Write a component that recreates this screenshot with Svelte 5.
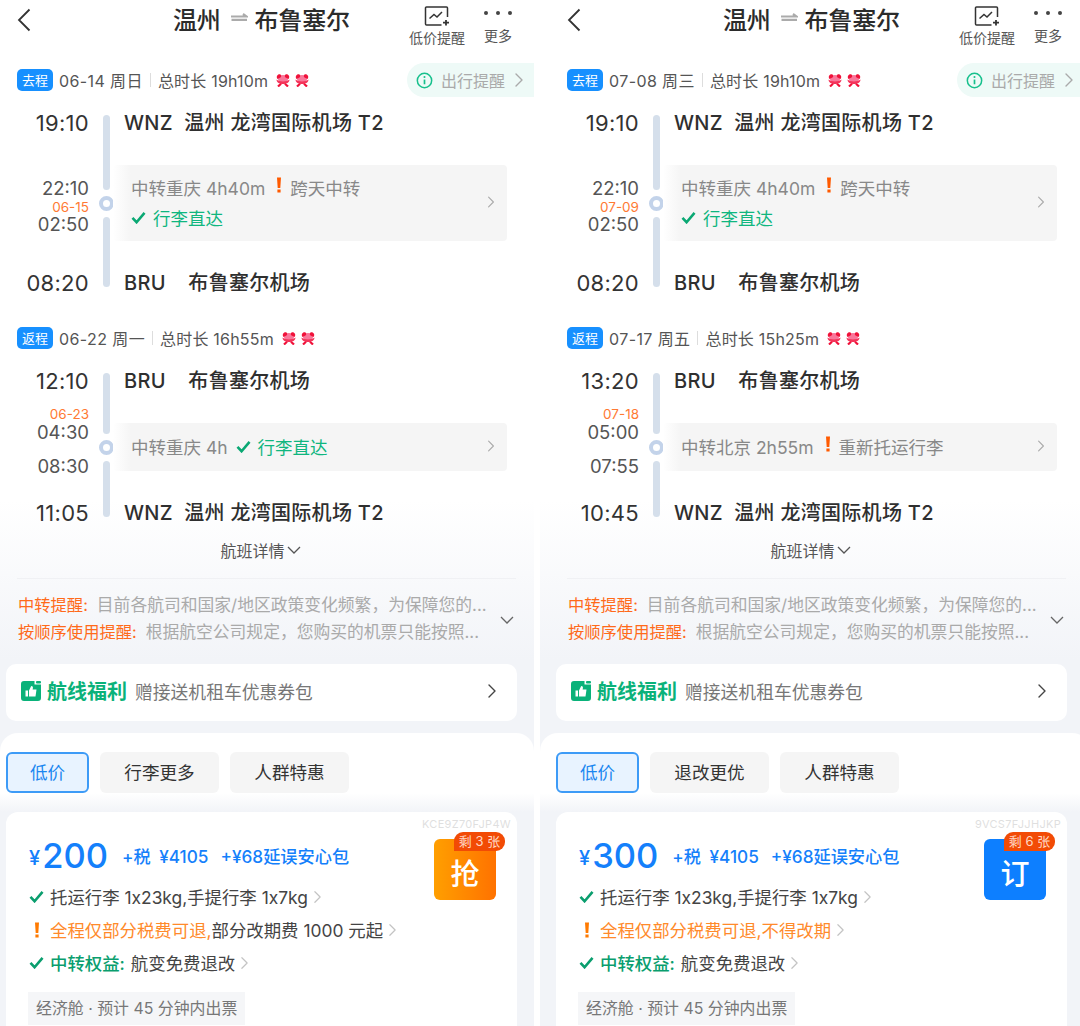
<script>
  const panels = [
    {
      trips: [
        {
          tag: '去程',
          date: '06-14 周日',
          total: '总时长 19h10m',
          notice: true,
          depart: { time: '19:10', airport: 'WNZ  温州 龙湾国际机场 T2' },
          stop: {
            arrive: '22:10',
            leaveDate: '06-15',
            leave: '02:50',
            text: '中转重庆 4h40m',
            warn: '跨天中转',
            check: '行李直达',
            wrap: true
          },
          arrive: { time: '08:20', airport: 'BRU    布鲁塞尔机场' }
        },
        {
          tag: '返程',
          date: '06-22 周一',
          total: '总时长 16h55m',
          depart: { time: '12:10', airport: 'BRU    布鲁塞尔机场' },
          stop: {
            arriveDate: '06-23',
            arrive: '04:30',
            leave: '08:30',
            text: '中转重庆 4h',
            check: '行李直达'
          },
          arrive: { time: '11:05', airport: 'WNZ  温州 龙湾国际机场 T2' }
        }
      ],
      tabs: ['低价', '行李更多', '人群特惠'],
      code: 'KCE9Z70FJP4W',
      price: '200',
      button: '抢',
      left: '剩 3 张',
      buttonClass: 'orange',
      refund: '全程仅部分税费可退,',
      change: '部分改期费 1000 元起'
    },
    {
      trips: [
        {
          tag: '去程',
          date: '07-08 周三',
          total: '总时长 19h10m',
          notice: true,
          depart: { time: '19:10', airport: 'WNZ  温州 龙湾国际机场 T2' },
          stop: {
            arrive: '22:10',
            leaveDate: '07-09',
            leave: '02:50',
            text: '中转重庆 4h40m',
            warn: '跨天中转',
            check: '行李直达',
            wrap: true
          },
          arrive: { time: '08:20', airport: 'BRU    布鲁塞尔机场' }
        },
        {
          tag: '返程',
          date: '07-17 周五',
          total: '总时长 15h25m',
          depart: { time: '13:20', airport: 'BRU    布鲁塞尔机场' },
          stop: {
            arriveDate: '07-18',
            arrive: '05:00',
            leave: '07:55',
            text: '中转北京 2h55m',
            warn: '重新托运行李'
          },
          arrive: { time: '10:45', airport: 'WNZ  温州 龙湾国际机场 T2' }
        }
      ],
      tabs: ['低价', '退改更优', '人群特惠'],
      code: '9VCS7FJJHJKP',
      price: '300',
      button: '订',
      left: '剩 6 张',
      buttonClass: 'blue',
      refund: '全程仅部分税费可退,不得改期',
      change: ''
    }
  ];
</script>

{#snippet chevron(cls)}
  <svg class={cls} viewBox="0 0 10 16" fill="none"><path d="M2 2l6 6-6 6" stroke="currentColor" stroke-width="1.4" stroke-linecap="round" stroke-linejoin="round" /></svg>
{/snippet}

{#snippet check()}
  <svg class="check" viewBox="0 0 16 14" fill="none"><path d="M1.5 7.5l4.4 4.6L14.5 2" stroke="currentColor" stroke-width="2.8" /></svg>
{/snippet}

{#snippet bang()}
  <svg class="bang" viewBox="0 0 6 16"><path d="M1 0.5h4l-.7 10.500H1.700z M1.400 12.500h3.200v3h-3.200z" fill="currentColor" /></svg>
{/snippet}

{#snippet crab()}
  <svg class="crab" viewBox="0 0 16 14" fill="none">
    <ellipse cx="8" cy="6" rx="5" ry="4" fill="#f9779a" />
    <path d="M2.500 6C.5 3.500 3 .5 5.500 1.500 6.500 2.200 6.500 3.800 5.500 4.500 4.500 5 3.500 5.500 2.500 6Z" fill="#f0123a" />
    <path d="M13.500 6C15.500 3.500 13 .5 10.500 1.500 9.500 2.200 9.500 3.800 10.500 4.500 11.500 5 12.500 5.500 13.500 6Z" fill="#f0123a" />
    <path d="M1.500 6.500C4 9 12 9 14.500 6.500 14.500 9.500 11.500 11 8 11S1.500 9.500 1.500 6.500Z" fill="#f4345a" />
    <path d="M3 13.500l3-2.800M13 13.500l-3-2.800" stroke="#f0123a" stroke-width="2.200" />
  </svg>
{/snippet}

{#snippet tripBlock(trip)}
  <section class="trip">
    <div class="trip-head">
      <span class="trip-tag">{trip.tag}</span>
      <span class="trip-date">{trip.date}</span>
      <i class="trip-sep"></i>
      <span class="trip-total">{trip.total}</span>
      <span class="crabs">{@render crab()}{@render crab()}</span>
      {#if trip.notice}
        <div class="notice">
          <svg class="notice-icon" viewBox="0 0 18 18" fill="none">
            <circle cx="9" cy="9" r="7.600" stroke="#17c08c" stroke-width="1.600" />
            <path d="M9 8v5" stroke="#17c08c" stroke-width="1.800" />
            <circle cx="9" cy="5.300" r="1.100" fill="#17c08c" />
          </svg>
          <span>出行提醒</span>
          {@render chevron('notice-arrow')}
        </div>
      {/if}
    </div>

    <div class="route">
      <div class="rail">
        <i class="bar"></i>
        <i class="dot"></i>
        <i class="bar last"></i>
      </div>

      <div class="time">{trip.depart.time}</div>
      <div class="airport">{trip.depart.airport}</div>

      <div class="stop-times">
        <div class="stop-half top">
          {#if trip.stop.arriveDate}<span class="next-day">{trip.stop.arriveDate}</span>{/if}
          <span>{trip.stop.arrive}</span>
        </div>
        <div class="stop-half">
          {#if trip.stop.leaveDate}<span class="next-day">{trip.stop.leaveDate}</span>{/if}
          <span>{trip.stop.leave}</span>
        </div>
      </div>
      <div class="stop-box">
        <div class="stop-text">
          <div class="stop-line">
            <span>{trip.stop.text}</span>
            {#if trip.stop.warn}
              <span class="warn">{@render bang()}</span>
              <span>{trip.stop.warn}</span>
            {/if}
            {#if trip.stop.check && !trip.stop.wrap}
              <span class="ok">{@render check()}{trip.stop.check}</span>
            {/if}
          </div>
          {#if trip.stop.check && trip.stop.wrap}
            <div class="stop-line"><span class="ok">{@render check()}{trip.stop.check}</span></div>
          {/if}
        </div>
        {@render chevron('stop-arrow')}
      </div>

      <div class="time">{trip.arrive.time}</div>
      <div class="airport">{trip.arrive.airport}</div>
    </div>
  </section>
{/snippet}

<div class="page">
  {#each panels as panel, p}
    <div class="phone" class:second={p === 1}>
      <div class="screen">
        <header class="topbar">
          <svg class="back" viewBox="0 0 14 24" fill="none"><path d="M12.500 1.500L2 12l10.500 10.500" stroke="#333" stroke-width="1.800" /></svg>
          <div class="title">
            <span>温州</span>
            <svg class="swap" viewBox="0 0 18 10" fill="none">
              <path d="M1 3.500h15.500L13 1M17 6.800H1.500" stroke="#ababab" stroke-width="2.200" />
            </svg>
            <span>布鲁塞尔</span>
          </div>
          <div class="action alert">
            <svg viewBox="0 0 26 20" fill="none">
              <path d="M23.500 11V2a1 1 0 0 0-1-1h-20a1 1 0 0 0-1 1v16a1 1 0 0 0 1 1h15" stroke="#333" stroke-width="1.500" />
              <path d="M5.500 12.500l4.500-4 3 2.500 5-5" stroke="#333" stroke-width="1.500" />
              <path d="M22 14v5.500M19 16.700h6" stroke="#333" stroke-width="1.800" />
            </svg>
            <span>低价提醒</span>
          </div>
          <div class="action more">
            <div class="dots"><i></i><i></i><i></i></div>
            <span>更多</span>
          </div>
        </header>

        {#each panel.trips as trip}
          {@render tripBlock(trip)}
        {/each}

        <div class="details">航班详情<svg viewBox="0 0 16 10" fill="none"><path d="M2 2l6 6 6-6" stroke="#555" stroke-width="1.300" /></svg></div>

        <div class="notes">
          <div class="notes-text">
            <p><b>中转提醒:</b>目前各航司和国家/地区政策变化频繁，为保障您的...</p>
            <p><b>按顺序使用提醒:</b>根据航空公司规定，您购买的机票只能按照...</p>
          </div>
          <svg class="notes-arrow" viewBox="0 0 16 10" fill="none"><path d="M2 2l6 6 6-6" stroke="#666" stroke-width="1.300" /></svg>
        </div>

        <div class="benefit">
          <svg class="benefit-icon" viewBox="0 0 20 20">
            <path d="M3 0h10.500v3.500H20V17a3 3 0 0 1-3 3H3a3 3 0 0 1-3-3V3a3 3 0 0 1 3-3z" fill="#0ab27a" />
            <rect x="15" y="0" width="5" height="2.500" rx="1" fill="#0ab27a" />
            <path d="M4.500 9.500h2.500v6H4.500z M8 9.500l2.200-4.500c1.300 0 2 .9 1.700 2.200l-.3 1.300H15.500l-1 7H8z" fill="#fff" />
          </svg>
          <b>航线福利</b>
          <span>赠接送机租车优惠券包</span>
          {@render chevron('benefit-arrow')}
        </div>

        <div class="sheet">
          <div class="tabs">
            {#each panel.tabs as tab, i}
              <div class="tab" class:active={i === 0}>{tab}</div>
            {/each}
          </div>
        </div>

        <div class="fare">
          <div class="fare-code">{panel.code}</div>
          <div class="buy {panel.buttonClass}">
            <span>{panel.button}</span>
            <em>{panel.left}</em>
          </div>
          <div class="fare-price">
            <span class="yen">¥</span><span class="amount">{panel.price}</span>
            <span class="extra tax">+税 ¥4105</span>
            <span class="extra">+¥68延误安心包</span>
          </div>
          <div class="fare-line">
            <span class="mark green">{@render check()}</span>
            <span>托运行李 1x23kg,手提行李 1x7kg</span>
            {@render chevron('fare-arrow')}
          </div>
          <div class="fare-line">
            <span class="mark orange-text">{@render bang()}</span>
            <span class="orange-text">{panel.refund}</span>
            {#if panel.change}<span>{panel.change}</span>{/if}
            {@render chevron('fare-arrow')}
          </div>
          <div class="fare-line">
            <span class="mark green">{@render check()}</span>
            <span class="green strong">中转权益:</span>
            <span class="after-colon">航变免费退改</span>
            {@render chevron('fare-arrow')}
          </div>
          <div class="fare-foot">经济舱 · 预计 45 分钟内出票</div>
        </div>
      </div>
    </div>
  {/each}
</div>

<style>
  :global(body) {
    background: #fff;
  }

  .page {
    display: flex;
    gap: 6px;
    width: 1080px;
    height: 1026px;
    overflow: hidden;
    font-family: Inter, "Noto Sans CJK SC", sans-serif;
    color: #333;
  }

  .phone {
    flex: 0 0 534px;
    height: 1026px;
    overflow: hidden;
    background: linear-gradient(#fff 500px, #f2f4f8 660px);
  }

  .phone.second {
    flex: 0 0 540px;
    padding-left: 10px;
    box-sizing: border-box;
  }

  .screen {
    width: 534px;
  }

  /* top bar */
  .topbar {
    display: flex;
    align-items: flex-start;
    height: 64px;
    padding-left: 17px;
    box-sizing: border-box;
  }

  .back {
    width: 14px;
    height: 24px;
    margin-top: 8px;
    flex: none;
  }

  .title {
    display: flex;
    align-items: center;
    gap: 7px;
    margin-left: 142px;
    width: 218px;
    height: 36px;
    font-size: 24px;
    font-weight: 500;
    letter-spacing: -0.2px;
    color: #2b2b2b;
  }

  .swap {
    width: 18px;
    height: 10px;
    margin-left: 2px;
  }

  .action {
    display: flex;
    flex-direction: column;
    align-items: center;
    font-size: 14px;
    color: #555;
  }

  .action.alert {
    width: 56px;
    margin-left: 18px;
    padding-top: 6px;
    line-height: 20px;
    white-space: nowrap;
    gap: 2px;
  }

  .action.alert svg {
    width: 26px;
    height: 20px;
  }

  .action.more {
    width: 28px;
    margin-left: 19px;
    padding-top: 11px;
    line-height: 20px;
    gap: 11px;
    white-space: nowrap;
  }

  .dots {
    display: flex;
    gap: 8px;
  }

  .dots i {
    width: 4px;
    height: 4px;
    border-radius: 50%;
    background: #444;
  }

  /* trip */
  .trip {
    margin-bottom: 31px;
  }

  .trip:nth-of-type(2) {
    margin-bottom: 11px;
  }

  .trip-head {
    display: flex;
    align-items: center;
    height: 22px;
    padding-left: 17px;
    margin-top: 5px;
    margin-bottom: 19px;
    font-size: 16px;
    color: #555;
  }

  .trip-tag {
    width: 36px;
    height: 22px;
    line-height: 22px;
    border-radius: 5px;
    background: #1790ff;
    color: #fff;
    font-size: 13px;
    text-align: center;
  }

  .trip-date {
    margin-left: 6px;
    letter-spacing: 0.4px;
  }

  .trip-sep {
    width: 1px;
    height: 14px;
    margin: 0 7px;
    background: #ddd;
  }

  .trip-total {
    letter-spacing: 0.2px;
  }

  .crabs {
    display: flex;
    gap: 3px;
    margin-left: 7px;
  }

  .crab {
    width: 16px;
    height: 14px;
  }

  .notice {
    display: flex;
    align-items: center;
    flex: none;
    width: 127px;
    height: 34px;
    margin-left: auto;
    padding-left: 9px;
    box-sizing: border-box;
    border-radius: 17px 0 0 17px;
    background: #eefaf7;
    color: #aaa;
    font-size: 16px;
  }

  .notice-icon {
    width: 17px;
    height: 17px;
    margin-right: 8px;
  }

  .notice-arrow {
    width: 10px;
    height: 16px;
    margin-left: 9px;
    color: #aaa;
  }

  .route {
    position: relative;
    display: grid;
    grid-template-columns: 89px 35px 1fr;
    row-gap: 29px;
    padding-right: 27px;
  }

  .rail {
    grid-column: 2;
    grid-row: 1 / span 3;
    display: grid;
    grid-template-rows: 1fr auto 1fr;
    justify-items: center;
    row-gap: 6px;
    padding: 5px 0;
  }

  .bar {
    width: 7px;
    border-radius: 4px;
    background: #d5dfeb;
  }

  .bar.last {
    margin-bottom: 4px;
  }

  .dot {
    width: 15px;
    height: 15px;
    box-sizing: border-box;
    border: 4px solid #c3d3ea;
    border-radius: 50%;
    background: #fff;
  }

  .time {
    grid-column: 1;
    height: 26px;
    line-height: 27px;
    text-align: right;
    font-size: 22px;
    letter-spacing: 0.3px;
    color: #333;
  }

  .airport {
    grid-column: 3;
    height: 26px;
    line-height: 27px;
    font-size: 20px;
    font-weight: 500;
    letter-spacing: 0.3px;
    color: #2f2f2f;
    white-space: pre;
  }

  .stop-times {
    grid-column: 1;
    contain: size;
    display: grid;
    grid-template-rows: minmax(0, 1fr) minmax(0, 1fr);
    font-size: 18.500px;
    color: #555;
    text-align: right;
  }

  .stop-half {
    display: flex;
    flex-direction: column;
    min-height: 0;
    padding-top: 9px;
    line-height: 20px;
  }

  .stop-half.top {
    justify-content: flex-end;
    padding: 0 0 5px;
  }

  .next-day {
    font-size: 13.500px;
    line-height: 15px;
    color: #ff7a33;
  }

  .stop-half:not(.top) .next-day {
    margin-top: -12px;
    margin-bottom: -1px;
  }

  .stop-box {
    grid-column: 3;
    display: flex;
    align-items: center;
    min-height: 48px;
    margin-left: -11px;
    padding: 7px 12px 9px 18px;
    box-sizing: border-box;
    border-radius: 4px;
    background: linear-gradient(90deg, #fff, #f5f5f5 18px);
  }

  .stop-text {
    flex: 1;
  }

  .stop-line {
    display: flex;
    align-items: center;
    gap: 5px;
    height: 30px;
    font-size: 17.500px;
    color: #888;
    white-space: nowrap;
  }

  .stop-line .ok {
    display: inline-flex;
    align-items: center;
    gap: 7px;
    color: #0fb67f;
  }

  .stop-line > span + .ok {
    margin-left: 3px;
  }

  .stop-line .check {
    width: 15px;
    height: 13px;
    color: #0aa873;
  }

  .warn {
    display: inline-flex;
    margin: -4px 3px 0 6px;
    color: #ff5a00;
  }

  .warn .bang {
    width: 6px;
    height: 16px;
  }

  .stop-arrow {
    width: 8px;
    height: 14px;
    color: #aaa;
  }

  /* below the trips */
  .details {
    display: flex;
    align-items: center;
    justify-content: center;
    gap: 1px;
    width: 522px;
    height: 26px;
    font-size: 16px;
    color: #555;
  }

  .details svg {
    width: 16px;
    height: 10px;
  }

  .notes {
    display: flex;
    align-items: center;
    margin: 15px 17px 0 17px;
    padding-top: 13px;
    border-top: 1px solid #f0f1f4;
    width: 499px;
    box-sizing: border-box;
  }

  .notes-text {
    flex: 1;
    min-width: 0;
  }

  .notes p {
    margin: 0 0 0 1px;
    height: 27px;
    line-height: 27px;
    font-size: 16.800px;
    color: #aaa;
    white-space: nowrap;
  }

  .notes b {
    margin-right: 9px;
    font-size: 16.300px;
    font-weight: 400;
    color: #ff6a1a;
  }

  .notes-arrow {
    width: 16px;
    height: 10px;
    margin-right: 1px;
    margin-top: 2px;
    flex: none;
  }

  .benefit {
    display: flex;
    align-items: center;
    width: 511px;
    height: 57px;
    margin: 18px 0 0 6px;
    padding: 0 20px 4px 15px;
    box-sizing: border-box;
    border-radius: 10px;
    background: #fff;
  }

  .benefit-icon {
    width: 20px;
    height: 20px;
    margin-right: 6px;
  }

  .benefit b {
    font-size: 20px;
    color: #0ab27a;
    font-weight: 700;
  }

  .benefit span {
    flex: 1;
    margin-left: 8px;
    font-size: 17.800px;
    color: #777;
  }

  .benefit-arrow {
    width: 10px;
    height: 16px;
    color: #444;
  }

  .sheet {
    margin-top: 12px;
    height: 79px;
    padding: 19px 0 0 6px;
    box-sizing: border-box;
    border-radius: 18px 18px 0 0;
    background: linear-gradient(#fff 60px, #f2f4f8);
  }

  .second .sheet {
    margin-left: -10px;
    padding-left: 16px;
    width: 550px;
  }

  .tabs {
    display: flex;
    gap: 11px;
  }

  .tab {
    width: 119px;
    height: 41px;
    line-height: 41px;
    border-radius: 6px;
    background: #f5f5f5;
    font-size: 17.600px;
    text-align: center;
    color: #333;
  }

  .tab.active {
    width: 83px;
    box-sizing: border-box;
    line-height: 37px;
    border: 2px solid #3d9bf7;
    background: #e8f3ff;
    color: #1a86f0;
  }

  .fare {
    position: relative;
    width: 511px;
    height: 214px;
    margin-left: 6px;
    padding: 20px 0 0 22px;
    box-sizing: border-box;
    border-radius: 12px 12px 0 0;
    background: #fff;
  }

  .fare-code {
    position: absolute;
    top: 5px;
    right: 6px;
    font-size: 11px;
    letter-spacing: 0.3px;
    color: #dfdfdf;
  }

  .buy {
    position: absolute;
    top: 27px;
    left: 428px;
    width: 62px;
    height: 61px;
    display: flex;
    align-items: center;
    justify-content: center;
    border-radius: 6px;
    color: #fff;
    font-size: 29px;
    font-weight: 500;
  }

  .buy.orange {
    background: linear-gradient(90deg, #ff9f00, #ff7200);
  }

  .buy.blue {
    background: #0d7fff;
  }

  .buy span {
    margin-top: 4px;
  }

  .buy em {
    position: absolute;
    top: -7px;
    left: 20px;
    width: 51px;
    height: 19px;
    line-height: 19px;
    border-radius: 9px 9px 9px 0;
    background: #f24b05;
    color: #ffd9c4;
    font-size: 13px;
    font-style: normal;
    font-weight: 400;
    text-align: center;
  }

  .fare-price {
    display: flex;
    align-items: center;
    height: 46px;
    color: #1480fb;
  }

  .yen {
    font-size: 20px;
    font-weight: 500;
    margin-top: 5px;
    margin-left: 1px;
  }

  .amount {
    font-size: 34.500px;
    font-weight: 500;
    margin-left: 2px;
    margin-right: 14px;
  }

  .extra {
    font-size: 17.200px;
    font-weight: 500;
    margin-right: 12px;
    white-space: nowrap;
  }

  .extra.tax {
    word-spacing: 4px;
  }

  .fare-line {
    display: flex;
    align-items: center;
    height: 33px;
    font-size: 17.400px;
    color: #444;
    white-space: nowrap;
  }

  .fare-price + .fare-line {
    margin-top: 2px;
  }

  .mark {
    display: inline-flex;
    justify-content: center;
    width: 15px;
    margin: 0 6px 0 1px;
  }

  .mark .check {
    width: 15px;
    height: 13px;
  }

  .mark .bang {
    width: 6px;
    height: 16px;
  }

  .green {
    color: #0a9e6e;
  }

  .strong {
    font-weight: 500;
  }

  .after-colon {
    margin-left: 6px;
  }

  .orange-text {
    color: #ff8a2b;
  }

  .mark.orange-text {
    color: #ff7a00;
  }

  .fare-arrow {
    width: 9px;
    height: 14px;
    margin-left: 5px;
    color: #c4c4c4;
  }

  .fare-foot {
    display: inline-block;
    margin-top: 13px;
    padding: 0 8px;
    height: 33px;
    line-height: 33px;
    background: #f5f6f8;
    font-size: 15.900px;
    color: #777;
    white-space: nowrap;
  }
</style>
